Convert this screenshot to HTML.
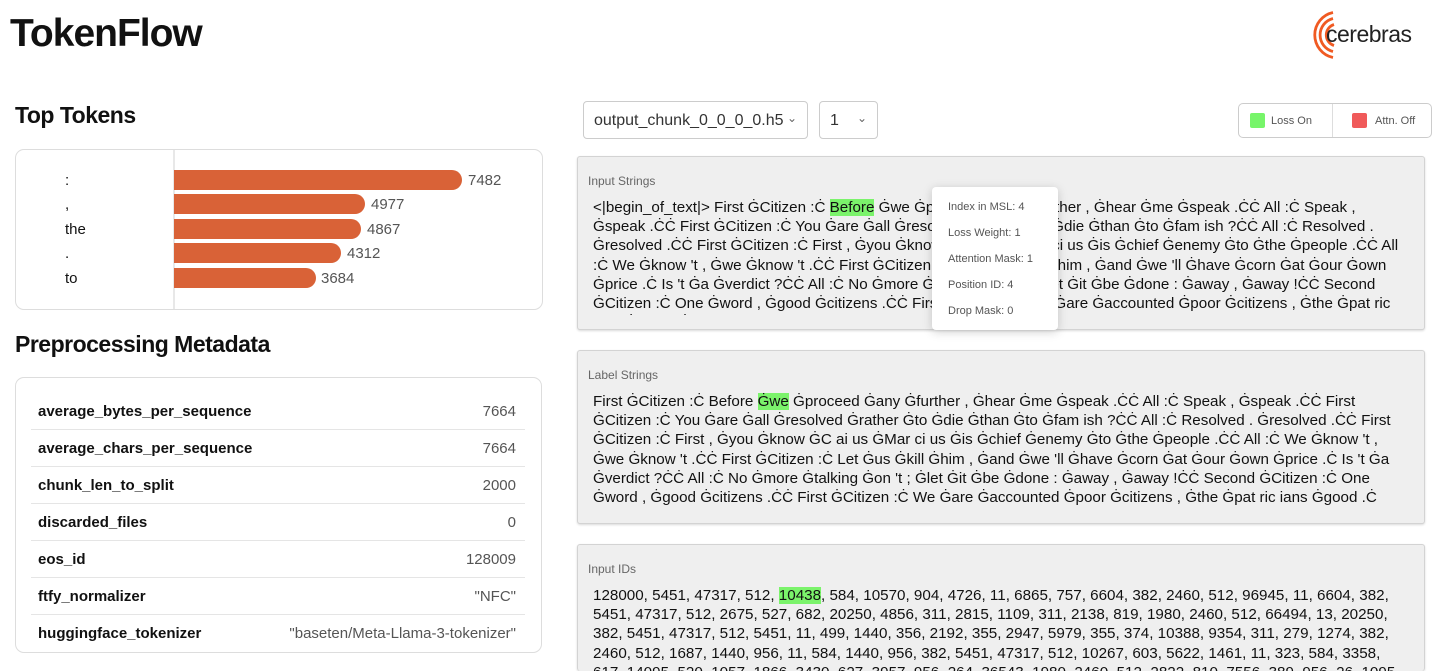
<!DOCTYPE html>
<html><head><meta charset="utf-8"><style>
*{box-sizing:border-box;margin:0;padding:0}
body{width:1440px;height:671px;overflow:hidden;background:#fff;font-family:"Liberation Sans",sans-serif;color:#111;position:relative}
.a{position:absolute}
h1{position:absolute;left:10px;top:12px;font-size:39px;font-weight:bold;letter-spacing:-1px}
h2{position:absolute;font-size:23px;font-weight:bold;letter-spacing:-0.5px}
.box{position:absolute;border:1px solid #ddd;border-radius:9px;background:#fff}
.lbl{position:absolute;left:65px;font-size:15px}
.bar{position:absolute;left:174px;height:20px;background:#d96237;border-radius:0 10px 10px 0}
.num{position:absolute;font-size:15px;color:#555}
.row{position:absolute;left:31px;width:494px;height:37px;border-bottom:1px solid #e5e5e5;font-size:15px}
.row b{position:absolute;left:7px;top:10px}
.row span{position:absolute;right:9px;top:10px;color:#555}
.sel{position:absolute;border:1px solid #ccc;border-radius:4px;height:38px;font-size:16px;color:#333;padding:10px 0 0 10px}
.sel i{position:absolute;right:10px;top:9px;font-style:normal;font-size:12px;color:#666}
.panel{position:absolute;left:577px;width:848px;background:#efefef;border:1px solid #d3d3d3;border-radius:3px;box-shadow:0 1px 2px rgba(0,0,0,.15);overflow:hidden}
.panel .t{position:absolute;left:10px;top:17px;font-size:12px;color:#666}
.txt{position:absolute;left:15px;top:41px;font-size:15.2px;line-height:19.2px;letter-spacing:0;white-space:nowrap;width:825px;height:117px;overflow:hidden}
.hl{background:#7bf36b}
.tip{position:absolute;left:932px;top:187px;width:126px;height:143px;background:#fff;border-radius:4px;box-shadow:0 2px 10px rgba(0,0,0,.18);font-size:11px;color:#555}
.tip div{position:absolute;left:16px}
</style></head><body>
<h1>TokenFlow</h1>
<svg class="a" style="left:1297px;top:8px" width="44" height="54" viewBox="0 0 44 54"><g fill="none" stroke="#f05a22" stroke-width="2.8"><path d="M36 4.5 A23 23 0 0 0 36 49.5"/><path d="M36 10.5 A17 17 0 0 0 36 43.5"/><path d="M37 16.5 A11 11 0 0 0 37 37.5"/></g></svg>
<div class="a" style="left:1326px;top:21px;font-size:23px;color:#222;letter-spacing:-0.5px">cerebras</div>

<h2 style="left:15px;top:102px">Top Tokens</h2>
<div class="box" style="left:15px;top:149px;width:528px;height:161px"></div>
<div class="a" style="left:173px;top:150px;width:2px;height:159px;background:#e8e8e8"></div>
<div class="lbl" style="top:172px">:</div><div class="bar" style="top:170px;width:288px"></div><div class="num" style="left:468px;top:172px">7482</div>
<div class="lbl" style="top:196px">,</div><div class="bar" style="top:194px;width:191px"></div><div class="num" style="left:371px;top:196px">4977</div>
<div class="lbl" style="top:221px">the</div><div class="bar" style="top:219px;width:187px"></div><div class="num" style="left:367px;top:221px">4867</div>
<div class="lbl" style="top:245px">.</div><div class="bar" style="top:243px;width:167px"></div><div class="num" style="left:347px;top:245px">4312</div>
<div class="lbl" style="top:270px">to</div><div class="bar" style="top:268px;width:142px"></div><div class="num" style="left:321px;top:270px">3684</div>

<h2 style="left:15px;top:331px">Preprocessing Metadata</h2>
<div class="box" style="left:15px;top:377px;width:527px;height:276px"></div>
<div class="row" style="top:393px"><b>average_bytes_per_sequence</b><span>7664</span></div>
<div class="row" style="top:430px"><b>average_chars_per_sequence</b><span>7664</span></div>
<div class="row" style="top:467px"><b>chunk_len_to_split</b><span>2000</span></div>
<div class="row" style="top:504px"><b>discarded_files</b><span>0</span></div>
<div class="row" style="top:541px"><b>eos_id</b><span>128009</span></div>
<div class="row" style="top:578px"><b>ftfy_normalizer</b><span>"NFC"</span></div>
<div class="row" style="top:615px;border:none"><b>huggingface_tokenizer</b><span>"baseten/Meta-Llama-3-tokenizer"</span></div>

<div class="sel" style="left:583px;top:101px;width:225px">output_chunk_0_0_0_0.h5<i>&#8964;</i></div>
<div class="sel" style="left:819px;top:101px;width:59px">1<i>&#8964;</i></div>
<div class="a" style="left:1238px;top:103px;width:194px;height:35px;border:1px solid #ccc;border-radius:5px;font-size:11px;color:#555">
<div class="a" style="left:11px;top:9px;width:15px;height:15px;background:#77f56a;border-radius:2px"></div><div class="a" style="left:32px;top:11px">Loss On</div>
<div class="a" style="left:93px;top:0;width:1px;height:33px;background:#ddd"></div>
<div class="a" style="left:113px;top:9px;width:15px;height:15px;background:#f05a5a;border-radius:2px"></div><div class="a" style="left:136px;top:11px">Attn. Off</div></div>

<div class="panel" style="top:156px;height:174px"><div class="t">Input Strings</div><div class="txt">
&lt;|begin_of_text|&gt; First ĠCitizen :Ċ <span class="hl">Before</span> Ġwe Ġproceed Ġany Ġfurther , Ġhear Ġme Ġspeak .ĊĊ All :Ċ Speak ,<br>
Ġspeak .ĊĊ First ĠCitizen :Ċ You Ġare Ġall Ġresolved Ġrather Ġto Ġdie Ġthan Ġto Ġfam ish ?ĊĊ All :Ċ Resolved .<br>
Ġresolved .ĊĊ First ĠCitizen :Ċ First , Ġyou Ġknow ĠC ai us ĠMar ci us Ġis Ġchief Ġenemy Ġto Ġthe Ġpeople .ĊĊ All<br>
:Ċ We Ġknow 't , Ġwe Ġknow 't .ĊĊ First ĠCitizen :Ċ Let Ġus Ġkill Ġhim , Ġand Ġwe 'll Ġhave Ġcorn Ġat Ġour Ġown<br>
Ġprice .Ċ Is 't Ġa Ġverdict ?ĊĊ All :Ċ No Ġmore Ġtalking Ġon 't ; Ġlet Ġit Ġbe Ġdone : Ġaway , Ġaway !ĊĊ Second<br>
ĠCitizen :Ċ One Ġword , Ġgood Ġcitizens .ĊĊ First ĠCitizen :Ċ We Ġare Ġaccounted Ġpoor Ġcitizens , Ġthe Ġpat ric<br>
ians Ġgood .Ċ</div></div>
<div class="tip">
<div style="top:14px">Index in MSL: 4</div><div style="top:40px">Loss Weight: 1</div><div style="top:66px">Attention Mask: 1</div><div style="top:92px">Position ID: 4</div><div style="top:118px">Drop Mask: 0</div></div>

<div class="panel" style="top:350px;height:174px"><div class="t">Label Strings</div><div class="txt">
First ĠCitizen :Ċ Before <span class="hl">Ġwe</span> Ġproceed Ġany Ġfurther , Ġhear Ġme Ġspeak .ĊĊ All :Ċ Speak , Ġspeak .ĊĊ First<br>
ĠCitizen :Ċ You Ġare Ġall Ġresolved Ġrather Ġto Ġdie Ġthan Ġto Ġfam ish ?ĊĊ All :Ċ Resolved . Ġresolved .ĊĊ First<br>
ĠCitizen :Ċ First , Ġyou Ġknow ĠC ai us ĠMar ci us Ġis Ġchief Ġenemy Ġto Ġthe Ġpeople .ĊĊ All :Ċ We Ġknow 't ,<br>
Ġwe Ġknow 't .ĊĊ First ĠCitizen :Ċ Let Ġus Ġkill Ġhim , Ġand Ġwe 'll Ġhave Ġcorn Ġat Ġour Ġown Ġprice .Ċ Is 't Ġa<br>
Ġverdict ?ĊĊ All :Ċ No Ġmore Ġtalking Ġon 't ; Ġlet Ġit Ġbe Ġdone : Ġaway , Ġaway !ĊĊ Second ĠCitizen :Ċ One<br>
Ġword , Ġgood Ġcitizens .ĊĊ First ĠCitizen :Ċ We Ġare Ġaccounted Ġpoor Ġcitizens , Ġthe Ġpat ric ians Ġgood .Ċ<br>
What</div></div>

<div class="panel" style="top:544px;height:127px;border-bottom:none"><div class="t">Input IDs</div><div class="txt" style="height:90px">
128000, 5451, 47317, 512, <span class="hl">10438</span>, 584, 10570, 904, 4726, 11, 6865, 757, 6604, 382, 2460, 512, 96945, 11, 6604, 382,<br>
5451, 47317, 512, 2675, 527, 682, 20250, 4856, 311, 2815, 1109, 311, 2138, 819, 1980, 2460, 512, 66494, 13, 20250,<br>
382, 5451, 47317, 512, 5451, 11, 499, 1440, 356, 2192, 355, 2947, 5979, 355, 374, 10388, 9354, 311, 279, 1274, 382,<br>
2460, 512, 1687, 1440, 956, 11, 584, 1440, 956, 382, 5451, 47317, 512, 10267, 603, 5622, 1461, 11, 323, 584, 3358,<br>
617, 14095, 520, 1057, 1866, 3430, 627, 3957, 956, 264, 36543, 1980, 2460, 512, 2822, 810, 7556, 389, 956, 26, 1095</div></div>
</body></html>
